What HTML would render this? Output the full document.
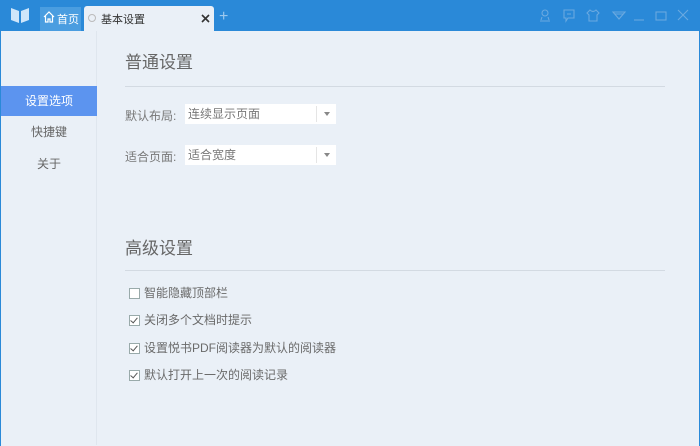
<!DOCTYPE html><html><head><meta charset="utf-8"><style>
*{margin:0;padding:0;box-sizing:border-box}
body{width:700px;height:446px;overflow:hidden;background:#eaf0f7;font-family:"Liberation Sans","Noto Sans CJK SC",sans-serif;position:relative;color:#666}
.top{position:absolute;left:0;top:0;width:700px;height:31px;background:#2a89d8}
.a{position:absolute}
.side{position:absolute;left:1px;top:31px;width:96px;height:414px;background:#eaf0f7;border-right:1px solid #dfe6ee}
.nav{position:absolute;left:1px;width:96px;height:30px;line-height:31px;text-align:center;font-size:12px;color:#666}
.h{position:absolute;left:125px;font-size:17px;color:#666}
.line{position:absolute;left:125px;width:540px;height:1px;background:#d3dae2}
.lab{position:absolute;left:125px;font-size:12px;color:#777}
.sel{position:absolute;left:185px;width:151px;height:20px;background:#fff;font-size:12px;color:#777;line-height:20px;padding-left:3px}
.sel:after{content:"";position:absolute;right:6px;top:8px;border:3px solid transparent;border-top:4px solid #888}
.sel i{position:absolute;left:131px;top:2px;width:1px;height:16px;background:#e5e5e5}
.cb{position:absolute;left:129px;font-size:12px;color:#6a6a6a;line-height:14px}
.cb b{display:inline-block;width:11px;height:11px;border:1px solid #9aa;background:#fff;vertical-align:-2px;margin-right:4px;position:relative}
.cb b.c:after{content:"";position:absolute;left:2px;top:0px;width:3px;height:6px;border:solid #555;border-width:0 1.5px 1.5px 0;transform:rotate(40deg)}
</style></head><body>
<div class="top"></div>
<svg class="a" style="left:10px;top:7px" width="20" height="17" viewBox="0 0 20 17"><path d="M1 1 L9 4 L9 16 L1 13Z M19 1 L11 4 L11 16 L19 13Z" fill="#cfe6fa"/></svg>
<div class="a" style="left:40px;top:7px;width:41px;height:24px;background:#4a9de0"></div>
<svg class="a" style="left:43px;top:11px" width="12" height="12" viewBox="0 0 12 12"><path d="M1 6 L6 1 L11 6 M2.5 5 V11 H5 V8 H7 V11 H9.5 V5" fill="none" stroke="#fff" stroke-width="1.2"/></svg>
<div class="a" style="left:57px;top:11px;font-size:11px;color:#fff">首页</div>
<div class="a" style="left:84px;top:6px;width:130px;height:25px;background:#eaf0f7;border-radius:3px 3px 0 0"></div>
<div class="a" style="left:88px;top:14px;width:8px;height:8px;border:1px solid #bbb;border-radius:50%"></div>
<div class="a" style="left:101px;top:11px;font-size:11px;color:#333">基本设置</div>
<svg class="a" style="left:201px;top:14px" width="9" height="9" viewBox="0 0 9 9"><path d="M1 1 L8 8 M8 1 L1 8" stroke="#333" stroke-width="1.6"/></svg>
<div class="a" style="left:219px;top:8px;font-size:16px;color:#9cc8ee">+</div>
<svg class="a" style="left:535px;top:8px" width="160" height="15" viewBox="0 0 160 15" fill="none" stroke="#6aa9e0" stroke-width="1.1"><circle cx="10" cy="5" r="3"/><path d="M5 13 H15 M7 9 L6 12 M13 9 L14 12"/><path d="M29 2 H39 V10 H33 L31 13 V10 H29Z M32 6 H36"/><path d="M55 2 L52 5 L54 7 V13 H62 V7 L64 5 L61 2 Q58 5 55 2Z"/><path d="M78 4 H90 L84 11Z M80 6 H88"/><path d="M99 12 H109"/><rect x="121" y="4" width="10" height="8"/><path d="M143 2 L153 12 M153 2 L143 12"/></svg>
<div class="side"></div>
<div class="a" style="left:0;top:31px;width:1px;height:415px;background:#2a89d8"></div>
<div class="a" style="left:699px;top:31px;width:1px;height:415px;background:#2a89d8"></div>
<div class="nav" style="top:86px;background:#5c94ef;color:#fff">设置选项</div>
<div class="nav" style="top:117px">快捷键</div>
<div class="nav" style="top:149px">关于</div>
<div class="h" style="top:48px">普通设置</div>
<div class="line" style="top:86px"></div>
<div class="lab" style="top:107px">默认布局:</div>
<div class="sel" style="top:104px">连续显示页面<i></i></div>
<div class="lab" style="top:148px">适合页面:</div>
<div class="sel" style="top:145px">适合宽度<i></i></div>
<div class="h" style="top:234px">高级设置</div>
<div class="line" style="top:270px"></div>
<div class="cb" style="top:286px"><b></b>智能隐藏顶部栏</div>
<div class="cb" style="top:313px"><b class="c"></b>关闭多个文档时提示</div>
<div class="cb" style="top:341px"><b class="c"></b>设置悦书PDF阅读器为默认的阅读器</div>
<div class="cb" style="top:368px"><b class="c"></b>默认打开上一次的阅读记录</div>
</body></html>
